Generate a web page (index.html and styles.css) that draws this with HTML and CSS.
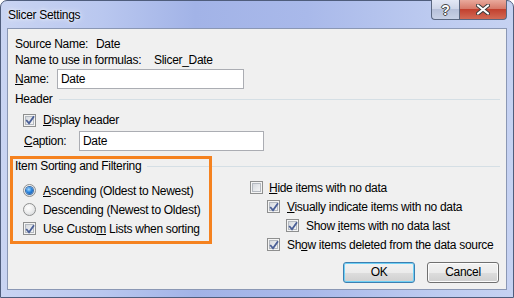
FILE: index.html
```html
<!DOCTYPE html>
<html>
<head>
<meta charset="utf-8">
<link rel="stylesheet" href="styles.css">
</head>
<body>
<div class="window">
  <div class="titlebar">
    <span class="title">Slicer Settings</span>
    <div class="capbtns">
      <div class="cap help">?</div>
      <div class="cap close">
        <svg width="14" height="11" viewBox="0 0 14 11"><path d="M2 1.5 L12 9.5 M12 1.5 L2 9.5" stroke="#3a3a3a" stroke-width="4" stroke-linecap="round"/><path d="M2 1.5 L12 9.5 M12 1.5 L2 9.5" stroke="#fff" stroke-width="2.2" stroke-linecap="round"/></svg>
      </div>
    </div>
  </div>
  <div class="client">
    <div class="info"><span class="k1">Source Name:</span><span>Date</span></div>
    <div class="info"><span class="k2">Name to use in formulas:</span><span>Slicer_Date</span></div>
    <div class="field-row name-row"><span class="lbl-name"><u>N</u>ame:</span><div class="field f-name">Date</div></div>
    <div class="group"><span>Header</span><div class="rule"></div></div>
    <div class="opt disp"><span class="cb"><svg width="10" height="10" viewBox="0 0 10 10"><path d="M1.2 5 L4 8.3 L9 1.2" fill="none" stroke="#4a5f97" stroke-width="1.8"/></svg></span><span><u>D</u>isplay header</span></div>
    <div class="field-row cap-row"><span class="lbl-cap"><u>C</u>aption:</span><div class="field f-cap">Date</div></div>
    <div class="group sort"><span>Item Sorting and Filtering</span><div class="rule"></div></div>
    <div class="cols">
      <div class="col-left">
        <div class="opt"><span class="rb on"><span class="dot"></span></span><span><u>A</u>scending (Oldest to Newest)</span></div>
        <div class="opt"><span class="rb"></span><span>Descendin<u>g</u> (Newest to Oldest)</span></div>
        <div class="opt"><span class="cb"><svg width="10" height="10" viewBox="0 0 10 10"><path d="M1.2 5 L4 8.3 L9 1.2" fill="none" stroke="#4a5f97" stroke-width="1.8"/></svg></span><span>Use Custo<u>m</u> Lists when sorting</span></div>
      </div>
      <div class="col-right">
        <div class="opt"><span class="cb"></span><span><u>H</u>ide items with no data</span></div>
        <div class="opt ind1"><span class="cb"><svg width="10" height="10" viewBox="0 0 10 10"><path d="M1.2 5 L4 8.3 L9 1.2" fill="none" stroke="#4a5f97" stroke-width="1.8"/></svg></span><span><u>V</u>isually indicate items with no data</span></div>
        <div class="opt ind2"><span class="cb"><svg width="10" height="10" viewBox="0 0 10 10"><path d="M1.2 5 L4 8.3 L9 1.2" fill="none" stroke="#4a5f97" stroke-width="1.8"/></svg></span><span>Show <u>i</u>tems with no data last</span></div>
        <div class="opt ind1"><span class="cb"><svg width="10" height="10" viewBox="0 0 10 10"><path d="M1.2 5 L4 8.3 L9 1.2" fill="none" stroke="#4a5f97" stroke-width="1.8"/></svg></span><span>Sh<u>o</u>w items deleted from the data source</span></div>
      </div>
    </div>
    <div class="buttons">
      <div class="btn default">OK</div>
      <div class="btn">Cancel</div>
    </div>
  </div>
  <div class="highlight"></div>
</div>
</body>
</html>
```
FILE: styles.css
```css
* { box-sizing: border-box; }
html, body { margin: 0; padding: 0; }
body {
  width: 514px; height: 298px; overflow: hidden;
  font-family: "Liberation Sans", Arial, sans-serif;
  font-size: 12px; letter-spacing: -0.3px; color: #000; background: #fff;
}
u { text-decoration: underline; text-underline-offset: 1px; }
.window {
  position: relative;
  width: 514px; height: 298px;
  background: linear-gradient(90deg, #c9d4f2 0%, #b9c7ef 20%, #a2b3e7 38%, #a9b9ea 60%, #bdcbf0 85%, #c6d2f2 100%);
  border: 1px solid #4f5d7c;
  border-radius: 7px 7px 0 0;
  display: flex; flex-direction: column;
  padding: 0 6px 7px 6px;
}
.titlebar {
  height: 27px;
  display: flex; justify-content: space-between; align-items: flex-start;
}
.title {
  margin-top: 7px; margin-left: 1px;
  line-height: 14px;
  text-shadow: 0 0 6px rgba(255,255,255,0.9), 0 0 3px rgba(255,255,255,0.8);
}
.capbtns { display: flex; margin-top: -1px; margin-right: 0; }
.cap {
  height: 20px;
  display: flex; align-items: center; justify-content: center;
  border: 1px solid #5a6780; border-top: none;
}
.help {
  width: 28px;
  border-radius: 0 0 0 4px;
  border-right: none;
  background: linear-gradient(#e3e8f5 0%, #cfd6e8 45%, #b6c0d9 50%, #c8d1e6 100%);
  color: #fff; font-weight: bold; font-size: 14px; letter-spacing: 0;
  text-shadow: 0 0 1px #333, 0 0 1px #333, 1px 0 0 #555, -1px 0 0 #555, 0 1px 0 #555, 0 -1px 0 #555;
}
.close {
  width: 48px;
  border-radius: 0 0 4px 0;
  background: linear-gradient(#e9a99c 0%, #d77a6a 45%, #c2412f 50%, #d26a55 100%);
}
.client {
  flex: 1;
  background: #f0f0f0;
  border: 1px solid #8a97b4;
  padding: 7px 6px 0 7px;
  display: flex; flex-direction: column;
}
.info { height: 16px; line-height: 16px; display: flex; white-space: nowrap; }
.k1 { width: 81px; flex: none; }
.k2 { width: 139px; flex: none; }
.field-row { height: 20px; display: flex; align-items: center; }
.name-row { margin-top: 1px; }
.lbl-name { width: 42px; flex: none; }
.cap-row { margin-top: 3px; padding-left: 9px; }
.lbl-cap { width: 55px; flex: none; }
.field {
  height: 20px; line-height: 18px;
  background: #fff; border: 1px solid #abadb3;
  padding-left: 3px;
}
.f-name { width: 187px; }
.f-cap { width: 185px; }
.group { margin-top: 2px; height: 16px; line-height: 16px; display: flex; align-items: center; }
.group .rule { flex: 1; height: 1px; background: #d5dfe5; margin-left: 6px; margin-right: 0; }
.group.sort { margin-top: 7px; }
.opt { height: 19px; display: flex; align-items: center; gap: 7px; white-space: nowrap; }
.disp { margin-top: 5px; height: 16px; padding-left: 8px; }
.cb {
  width: 13px; height: 13px; flex: none;
  border: 1px solid #8e8f8f;
  background: linear-gradient(135deg, #cdd1d7 0%, #e6e8eb 50%, #fbfbfb 100%);
  box-shadow: inset 0 0 0 1px #f4f4f4, inset 0 0 0 2px #b4b9c0;
  display: flex; align-items: center; justify-content: center;
}
.cb svg { display: block; }
.rb {
  width: 13px; height: 13px; flex: none;
  border-radius: 50%;
  border: 1px solid #8e8f8f;
  background: radial-gradient(circle at 40% 35%, #ffffff 0%, #f0f0f0 40%, #cfd2d6 100%);
  display: flex; align-items: center; justify-content: center;
}
.rb .dot {
  width: 7px; height: 7px; border-radius: 50%;
  background: radial-gradient(circle at 40% 35%, #a8dcff 0%, #2b86e0 45%, #0d4a9c 100%);
  box-shadow: 0 0 0 1px #3a6ea8;
}
.cols { display: flex; }
.col-left { width: 235px; flex: none; padding-top: 7px; padding-left: 8px; }
.col-left .opt { gap: 7px; }
.col-right { padding-top: 4px; }
.col-right .opt:first-child { gap: 6px; }
.ind1 { padding-left: 17px; }
.ind2 { padding-left: 36px; }
.buttons { margin-top: 8px; display: flex; justify-content: flex-end; gap: 12px; padding-right: 1px; }
.btn {
  width: 72px; height: 21px; line-height: 19px; text-align: center;
  border: 1px solid #707070; border-radius: 3px;
  background: linear-gradient(#f2f2f2 0%, #ebebeb 50%, #dddddd 51%, #cfcfcf 100%);
  box-shadow: inset 0 0 0 1px #fcfcfc;
}
.btn.default {
  border-color: #3c7fb1;
  box-shadow: inset 0 0 0 1px #6fd0f5;
}
.highlight {
  position: absolute;
  left: 9px; top: 155px;
  width: 202px; height: 88px;
  border: 3px solid #f5821f;
}
```
